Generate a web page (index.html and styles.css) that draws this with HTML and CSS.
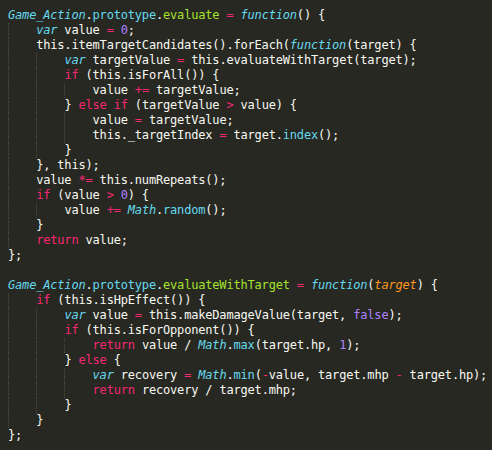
FILE: index.html
```html
<!DOCTYPE html>
<html>
<head>
<meta charset="utf-8">
<link rel="stylesheet" href="styles.css">
</head>
<body>
<div class="editor">
<div class="ln"><i class="c">Game_Action</i>.<span class="c">prototype</span>.<span class="f">evaluate</span> <span class="k">=</span> <i class="c">function</i>() {</div>
<div class="ln"><span class="g">    </span><i class="c">var</i> value <span class="k">=</span> <span class="n">0</span>;</div>
<div class="ln"><span class="g">    </span>this.itemTargetCandidates().forEach(<i class="c">function</i>(target) {</div>
<div class="ln"><span class="g">    </span><span class="g">    </span><i class="c">var</i> targetValue <span class="k">=</span> this.evaluateWithTarget(target);</div>
<div class="ln"><span class="g">    </span><span class="g">    </span><span class="k">if</span> (this.isForAll()) {</div>
<div class="ln"><span class="g">    </span><span class="g">    </span><span class="g">    </span>value <span class="k">+=</span> targetValue;</div>
<div class="ln"><span class="g">    </span><span class="g">    </span>} <span class="k">else</span> <span class="k">if</span> (targetValue <span class="k">&gt;</span> value) {</div>
<div class="ln"><span class="g">    </span><span class="g">    </span><span class="g">    </span>value <span class="k">=</span> targetValue;</div>
<div class="ln"><span class="g">    </span><span class="g">    </span><span class="g">    </span>this._targetIndex <span class="k">=</span> target.<span class="c">index</span>();</div>
<div class="ln"><span class="g">    </span><span class="g">    </span>}</div>
<div class="ln"><span class="g">    </span>}, this);</div>
<div class="ln"><span class="g">    </span>value <span class="k">*=</span> this.numRepeats();</div>
<div class="ln"><span class="g">    </span><span class="k">if</span> (value <span class="k">&gt;</span> <span class="n">0</span>) {</div>
<div class="ln"><span class="g">    </span><span class="g">    </span>value <span class="k">+=</span> <i class="c">Math</i>.<span class="c">random</span>();</div>
<div class="ln"><span class="g">    </span>}</div>
<div class="ln"><span class="g">    </span><span class="k">return</span> value;</div>
<div class="ln">};</div>
<div class="ln"> </div>
<div class="ln"><i class="c">Game_Action</i>.<span class="c">prototype</span>.<span class="f">evaluateWithTarget</span> <span class="k">=</span> <i class="c">function</i>(<i class="p">target</i>) {</div>
<div class="ln"><span class="g">    </span><span class="k">if</span> (this.isHpEffect()) {</div>
<div class="ln"><span class="g">    </span><span class="g">    </span><i class="c">var</i> value <span class="k">=</span> this.makeDamageValue(target, <span class="n">false</span>);</div>
<div class="ln"><span class="g">    </span><span class="g">    </span><span class="k">if</span> (this.isForOpponent()) {</div>
<div class="ln"><span class="g">    </span><span class="g">    </span><span class="g">    </span><span class="k">return</span> value / <i class="c">Math</i>.<span class="c">max</span>(target.hp, <span class="n">1</span>);</div>
<div class="ln"><span class="g">    </span><span class="g">    </span>} <span class="k">else</span> {</div>
<div class="ln"><span class="g">    </span><span class="g">    </span><span class="g">    </span><i class="c">var</i> recovery <span class="k">=</span> <i class="c">Math</i>.<span class="c">min</span>(<span class="k">-</span>value, target.mhp <span class="k">-</span> target.hp);</div>
<div class="ln"><span class="g">    </span><span class="g">    </span><span class="g">    </span><span class="k">return</span> recovery / target.mhp;</div>
<div class="ln"><span class="g">    </span><span class="g">    </span>}</div>
<div class="ln"><span class="g">    </span>}</div>
<div class="ln">};</div>
</div>
</body>
</html>
```

FILE: styles.css
```css
html, body {
  margin: 0;
  padding: 0;
  background: #272822;
}
body {
  width: 492px;
  height: 450px;
  overflow: hidden;
}
.editor {
  padding: 8px 0 0 8px;
  font-family: "DejaVu Sans Mono", monospace;
  font-size: 12px;
  letter-spacing: -0.18px;
  line-height: 15px;
  color: #f8f8f2;
}
.ln {
  height: 15px;
  white-space: pre;
}
.g {
  display: inline-block;
  height: 15px;
  vertical-align: top;
  background-image: repeating-linear-gradient(to bottom, #4c4d46 0 1px, transparent 1px 2px);
  background-size: 1px 100%;
  background-repeat: no-repeat;
  background-position: left top;
}
i { font-style: italic; }
.c { color: #66d9ef; }
.k { color: #f92672; }
.f { color: #a6e22e; }
.n { color: #ae81ff; }
.p { color: #fd971f; }
```
